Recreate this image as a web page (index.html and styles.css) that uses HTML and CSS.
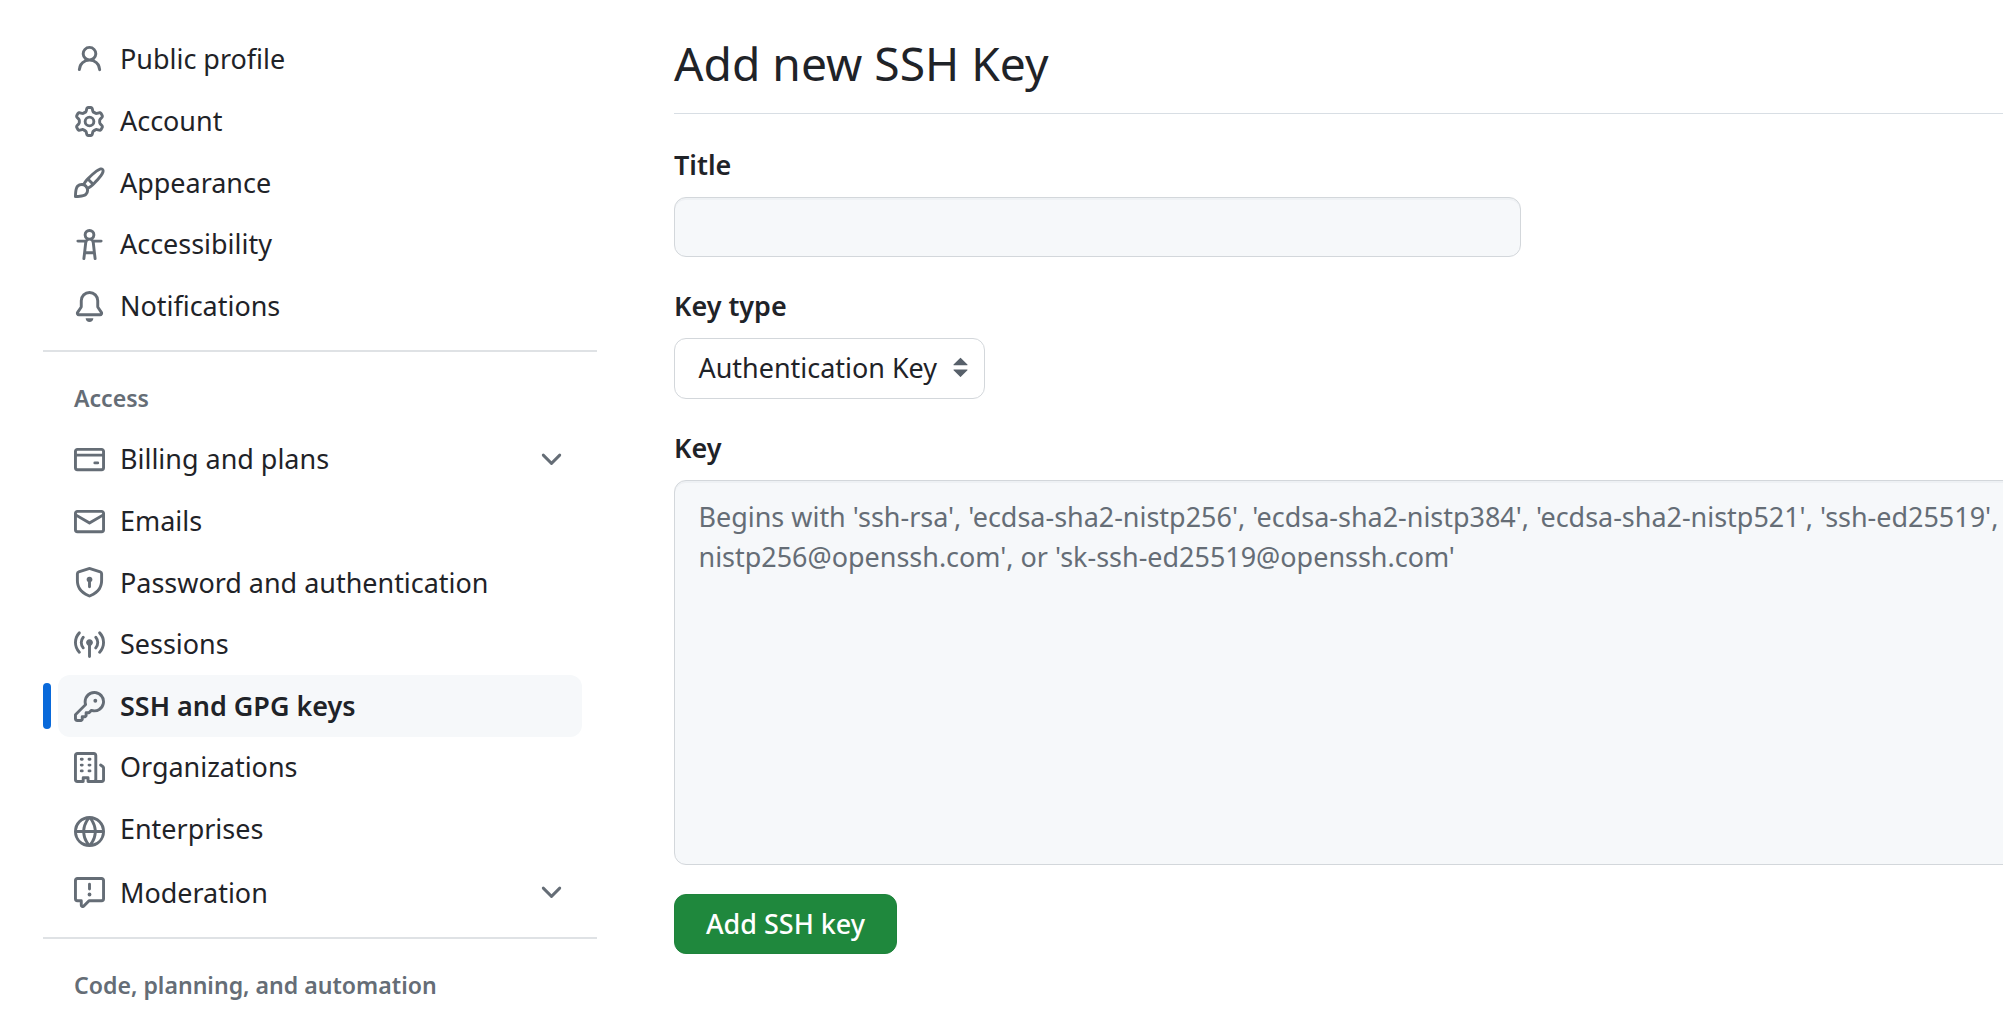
FILE: index.html
```html
<!DOCTYPE html>
<html lang="en">
<head>
<meta charset="utf-8">
<title>Add new SSH Key</title>
<link rel="stylesheet" href="styles.css">
</head>
<body>
<div class="page">
  <nav class="sidebar">
    <ul class="nav-list">
      <li class="nav-item"><svg class="icon" viewBox="0 0 16 16"><path d="M10.561 8.073a6.005 6.005 0 0 1 3.432 5.142.75.75 0 1 1-1.498.07 4.5 4.5 0 0 0-8.99 0 .75.75 0 0 1-1.498-.07 6.004 6.004 0 0 1 3.431-5.142 3.999 3.999 0 1 1 5.123 0ZM10.5 5a2.5 2.5 0 1 0-5 0 2.5 2.5 0 0 0 5 0Z"/></svg><span class="label">Public profile</span></li>
      <li class="nav-item"><svg class="icon" viewBox="0 0 16 16"><path d="M8 0a8.2 8.2 0 0 1 .701.031C9.444.095 9.99.645 10.16 1.29l.288 1.107c.018.066.079.158.212.224.231.114.454.243.668.386.123.082.233.09.299.071l1.103-.303c.644-.176 1.392.021 1.82.63.27.385.506.792.704 1.218.315.675.111 1.422-.364 1.891l-.814.806c-.049.048-.098.147-.088.294.016.257.016.515 0 .772-.01.147.038.246.088.294l.814.806c.475.469.679 1.216.364 1.891a7.977 7.977 0 0 1-.704 1.217c-.428.61-1.176.807-1.82.63l-1.102-.302c-.067-.019-.177-.011-.3.071a5.909 5.909 0 0 1-.668.386c-.133.066-.194.158-.211.224l-.29 1.106c-.168.646-.715 1.196-1.458 1.26a8.006 8.006 0 0 1-1.402 0c-.743-.064-1.289-.614-1.458-1.26l-.289-1.106c-.018-.066-.079-.158-.212-.224a5.738 5.738 0 0 1-.668-.386c-.123-.082-.233-.09-.299-.071l-1.103.303c-.644.176-1.392-.021-1.82-.63a8.12 8.12 0 0 1-.704-1.218c-.315-.675-.111-1.422.363-1.891l.815-.806c.05-.048.098-.147.088-.294a6.214 6.214 0 0 1 0-.772c.01-.147-.038-.246-.088-.294l-.815-.806C.635 6.045.431 5.298.746 4.623a7.92 7.92 0 0 1 .704-1.217c.428-.61 1.176-.807 1.82-.63l1.102.302c.067.019.177.011.3-.071.214-.143.437-.272.668-.386.133-.066.194-.158.211-.224l.29-1.106C6.009.645 6.556.095 7.299.03 7.53.01 7.764 0 8 0Zm-.571 1.525c-.036.003-.108.036-.137.146l-.289 1.105c-.147.561-.549.967-.998 1.189-.173.086-.34.183-.5.29-.417.278-.97.423-1.529.27l-1.103-.303c-.109-.03-.175.016-.195.045-.22.312-.412.644-.573.99-.014.031-.021.11.059.19l.815.806c.411.406.562.957.53 1.456a4.709 4.709 0 0 0 0 .582c.032.499-.119 1.05-.53 1.456l-.815.806c-.081.08-.073.159-.059.19.162.346.353.677.573.989.02.03.085.076.195.046l1.102-.303c.56-.153 1.113-.008 1.53.27.161.107.328.204.501.29.447.222.85.629.997 1.189l.289 1.105c.029.109.101.143.137.146a6.6 6.6 0 0 0 1.142 0c.036-.003.108-.036.137-.146l.289-1.105c.147-.561.549-.967.998-1.189.173-.086.34-.183.5-.29.417-.278.97-.423 1.529-.27l1.103.303c.109.029.175-.016.195-.045.22-.313.411-.644.573-.99.014-.031.021-.11-.059-.19l-.815-.806c-.411-.406-.562-.957-.53-1.456a4.709 4.709 0 0 0 0-.582c-.032-.499.119-1.05.53-1.456l.815-.806c.081-.08.073-.159.059-.19a6.464 6.464 0 0 0-.573-.989c-.02-.03-.085-.076-.195-.046l-1.102.303c-.56.153-1.113.008-1.53-.27a4.44 4.44 0 0 0-.501-.29c-.447-.222-.85-.629-.997-1.189l-.289-1.105c-.029-.11-.101-.143-.137-.146a6.6 6.6 0 0 0-1.142 0ZM11 8a3 3 0 1 1-6 0 3 3 0 0 1 6 0ZM9.5 8a1.5 1.5 0 1 0-3.001.001A1.5 1.5 0 0 0 9.5 8Z"/></svg><span class="label">Account</span></li>
      <li class="nav-item"><svg class="icon" viewBox="0 0 16 16"><path d="M11.134 1.535c.7-.509 1.416-.942 2.076-1.155.649-.21 1.463-.267 2.069.34.603.601.568 1.411.368 2.07-.202.668-.624 1.39-1.125 2.096-1.011 1.424-2.496 2.987-3.775 4.249-1.098 1.084-2.132 1.839-3.04 2.3a3.744 3.744 0 0 1-1.055 3.217c-.431.431-1.065.691-1.657.861-.614.177-1.294.287-1.914.357A21.151 21.151 0 0 1 .797 16H.743l.007-.75H.749L.742 16a.75.75 0 0 1-.743-.742l.743-.008-.742.007v-.054a21.25 21.25 0 0 1 .13-2.284c.067-.647.187-1.287.358-1.914.17-.591.43-1.226.86-1.657a3.746 3.746 0 0 1 3.227-1.054c.466-.893 1.225-1.907 2.314-2.982 1.271-1.255 2.833-2.75 4.245-3.777ZM1.62 13.089c-.051.464-.086.929-.104 1.395.466-.018.932-.053 1.396-.104a10.511 10.511 0 0 0 1.668-.309c.526-.151.856-.325 1.011-.48a2.25 2.25 0 1 0-3.182-3.182c-.155.155-.329.485-.48 1.01a10.515 10.515 0 0 0-.309 1.67Zm10.396-10.34c-1.224.89-2.605 2.189-3.822 3.384l1.718 1.718c1.21-1.205 2.51-2.597 3.387-3.833.47-.662.78-1.227.912-1.662.134-.444.032-.551.009-.575h-.001V1.78c-.014-.014-.113-.113-.548.027-.432.14-.995.462-1.655.942Zm-4.832 7.266-.001.001a9.859 9.859 0 0 0 1.63-1.142L7.155 7.216a9.7 9.7 0 0 0-1.161 1.607c.482.302.889.71 1.19 1.192Z"/></svg><span class="label">Appearance</span></li>
      <li class="nav-item"><svg class="icon" viewBox="0 0 16 16"><path d="M9.923 5.302c.063.063.122.129.178.198H14A.75.75 0 0 1 14 7h-3.3l.578 5.163.362 2.997a.75.75 0 0 1-1.49.18L9.868 13H6.132l-.282 2.34a.75.75 0 0 1-1.49-.18l.362-2.997L5.3 7H2a.75.75 0 0 1 0-1.5h3.9a2.54 2.54 0 0 1 .176-.198 3 3 0 1 1 3.847 0ZM9.2 7.073h-.001a1.206 1.206 0 0 0-2.398 0L6.305 11.5h3.39ZM9.5 3a1.5 1.5 0 1 0-3.001.001A1.5 1.5 0 0 0 9.5 3Z"/></svg><span class="label">Accessibility</span></li>
      <li class="nav-item"><svg class="icon" viewBox="0 0 16 16"><path d="M8 16a2 2 0 0 0 1.985-1.75c.017-.137-.097-.25-.235-.25h-3.5c-.138 0-.252.113-.235.25A2 2 0 0 0 8 16ZM3 5a5 5 0 0 1 10 0v2.947c0 .05.015.098.042.139l1.703 2.555A1.519 1.519 0 0 1 13.482 13H2.518a1.516 1.516 0 0 1-1.263-2.36l1.703-2.554A.255.255 0 0 0 3 7.947Zm5-3.5A3.5 3.5 0 0 0 4.5 5v2.947c0 .346-.102.683-.294.97l-1.703 2.556a.017.017 0 0 0-.003.01l.001.006c0 .002.002.004.004.006l.006.004.007.001h10.964l.007-.001.006-.004.004-.006.001-.007a.017.017 0 0 0-.003-.01l-1.703-2.554a1.745 1.745 0 0 1-.294-.97V5A3.5 3.5 0 0 0 8 1.5Z"/></svg><span class="label">Notifications</span></li>
    </ul>
    <h3 class="group-title">Access</h3>
    <ul class="nav-list">
      <li class="nav-item"><svg class="icon" viewBox="0 0 16 16"><path d="M10.75 9a.75.75 0 0 0 0 1.5h1.5a.75.75 0 0 0 0-1.5h-1.5Z"/><path d="M0 3.75C0 2.784.784 2 1.75 2h12.5c.966 0 1.75.784 1.75 1.75v8.5A1.75 1.75 0 0 1 14.25 14H1.75A1.75 1.75 0 0 1 0 12.25ZM14.5 6.5h-13v5.75c0 .138.112.25.25.25h12.5a.25.25 0 0 0 .25-.25Zm0-2.75a.25.25 0 0 0-.25-.25H1.75a.25.25 0 0 0-.25.25V5h13Z"/></svg><span class="label">Billing and plans</span><svg class="icon" viewBox="0 0 16 16"><path d="M12.78 5.22a.749.749 0 0 1 0 1.06l-4.25 4.25a.749.749 0 0 1-1.06 0L3.22 6.28a.749.749 0 1 1 1.06-1.06L8 8.939l3.72-3.719a.749.749 0 0 1 1.06 0Z"/></svg></li>
      <li class="nav-item"><svg class="icon" viewBox="0 0 16 16"><path d="M1.75 2h12.5c.966 0 1.75.784 1.75 1.75v8.5A1.75 1.75 0 0 1 14.25 14H1.75A1.75 1.75 0 0 1 0 12.25v-8.5C0 2.784.784 2 1.75 2ZM1.5 12.251c0 .138.112.25.25.25h12.5a.25.25 0 0 0 .25-.25V5.809L8.38 9.397a.75.75 0 0 1-.76 0L1.5 5.809v6.442Zm13-8.181v-.32a.25.25 0 0 0-.25-.25H1.75a.25.25 0 0 0-.25.25v.32L8 7.88Z"/></svg><span class="label">Emails</span></li>
      <li class="nav-item"><svg class="icon" viewBox="0 0 16 16"><path d="m8.533.133 5.25 1.68A1.75 1.75 0 0 1 15 3.48V7c0 1.566-.32 3.182-1.303 4.682-.983 1.498-2.585 2.813-5.032 3.855a1.697 1.697 0 0 1-1.33 0c-2.447-1.042-4.049-2.357-5.032-3.855C1.32 10.182 1 8.566 1 7V3.48a1.755 1.755 0 0 1 1.217-1.667l5.25-1.68a1.748 1.748 0 0 1 1.066 0Zm-.61 1.429.001.001-5.25 1.68a.251.251 0 0 0-.174.237V7c0 1.36.275 2.666 1.057 3.859.784 1.194 2.121 2.342 4.366 3.298a.196.196 0 0 0 .154 0c2.245-.957 3.582-2.103 4.366-3.297C13.225 9.666 13.5 8.358 13.5 7V3.48a.25.25 0 0 0-.174-.238l-5.25-1.68a.25.25 0 0 0-.153 0ZM9.5 6.5c0 .536-.286 1.032-.75 1.3v2.45a.75.75 0 0 1-1.5 0V7.8A1.5 1.5 0 1 1 9.5 6.5Z"/></svg><span class="label">Password and authentication</span></li>
      <li class="nav-item"><svg class="icon" viewBox="0 0 16 16"><path d="M8.75 8.582v5.668a.75.75 0 0 1-1.5 0V8.582a1.75 1.75 0 1 1 1.5 0Zm3.983-7.125a.75.75 0 0 1 1.06.026A7.976 7.976 0 0 1 16 7c0 2.139-.84 4.083-2.207 5.517a.75.75 0 1 1-1.086-1.034A6.474 6.474 0 0 0 14.5 7a6.474 6.474 0 0 0-1.793-4.483.75.75 0 0 1 .026-1.06Zm-9.466 0c.3.286.312.76.026 1.06A6.474 6.474 0 0 0 1.5 7a6.47 6.47 0 0 0 1.793 4.483.75.75 0 0 1-1.086 1.034A7.973 7.973 0 0 1 0 7c0-2.139.84-4.083 2.207-5.517a.75.75 0 0 1 1.06-.026Zm8.556 2.321A4.988 4.988 0 0 1 13 7a4.988 4.988 0 0 1-1.177 3.222.75.75 0 1 1-1.146-.967A3.487 3.487 0 0 0 11.5 7c0-.86-.309-1.645-.823-2.255a.75.75 0 0 1 1.146-.967Zm-6.492.958A3.48 3.48 0 0 0 4.5 7a3.48 3.48 0 0 0 .823 2.255.75.75 0 0 1-1.146.967A4.981 4.981 0 0 1 3 7a4.982 4.982 0 0 1 1.188-3.236.75.75 0 1 1 1.143.972Z"/></svg><span class="label">Sessions</span></li>
      <li class="nav-item current"><svg class="icon" viewBox="0 0 16 16"><path d="M10.5 0a5.499 5.499 0 1 1-1.288 10.848l-.932.932a.749.749 0 0 1-.53.22H7v.75a.749.749 0 0 1-.22.53l-.5.5a.749.749 0 0 1-.53.22H5v.75a.749.749 0 0 1-.22.53l-.5.5a.749.749 0 0 1-.53.22h-2A1.75 1.75 0 0 1 0 14.25v-2c0-.199.079-.389.22-.53l4.932-4.932A5.5 5.5 0 0 1 10.5 0Zm-4 5.5c-.001.431.069.86.205 1.269a.75.75 0 0 1-.181.768L1.5 12.56v1.69c0 .138.112.25.25.25h1.69l.06-.06v-1.19a.75.75 0 0 1 .75-.75h1.19l.06-.06v-1.19a.75.75 0 0 1 .75-.75h1.19l1.023-1.025a.75.75 0 0 1 .768-.18A4 4 0 1 0 6.5 5.5ZM11 6a1 1 0 1 1 0-2 1 1 0 0 1 0 2Z"/></svg><span class="label">SSH and GPG keys</span></li>
      <li class="nav-item"><svg class="icon" viewBox="0 0 16 16"><path d="M1.75 16A1.75 1.75 0 0 1 0 14.25V1.75C0 .784.784 0 1.75 0h8.5C11.216 0 12 .784 12 1.75v12.5c0 .085-.006.168-.018.25h2.268a.25.25 0 0 0 .25-.25V8.285a.25.25 0 0 0-.111-.208l-1.055-.703a.749.749 0 1 1 .832-1.248l1.055.703c.487.325.779.871.779 1.456v5.965A1.75 1.75 0 0 1 14.25 16h-3.5a.766.766 0 0 1-.197-.026c-.099.017-.2.026-.303.026h-3a.75.75 0 0 1-.75-.75V14h-1v1.25a.75.75 0 0 1-.75.75Zm-.25-1.75c0 .138.112.25.25.25H4v-1.25a.75.75 0 0 1 .75-.75h2.5a.75.75 0 0 1 .75.75v1.25h2.25a.25.25 0 0 0 .25-.25V1.75a.25.25 0 0 0-.25-.25h-8.5a.25.25 0 0 0-.25.25ZM3.75 6h.5a.75.75 0 0 1 0 1.5h-.5a.75.75 0 0 1 0-1.5ZM3 3.75A.75.75 0 0 1 3.75 3h.5a.75.75 0 0 1 0 1.5h-.5A.75.75 0 0 1 3 3.75Zm4 3A.75.75 0 0 1 7.75 6h.5a.75.75 0 0 1 0 1.5h-.5A.75.75 0 0 1 7 6.75ZM7.75 3h.5a.75.75 0 0 1 0 1.5h-.5a.75.75 0 0 1 0-1.5ZM3 9.75A.75.75 0 0 1 3.75 9h.5a.75.75 0 0 1 0 1.5h-.5A.75.75 0 0 1 3 9.75ZM7.75 9h.5a.75.75 0 0 1 0 1.5h-.5a.75.75 0 0 1 0-1.5Z"/></svg><span class="label">Organizations</span></li>
      <li class="nav-item"><svg class="icon icon-globe" viewBox="0 0 16 16"><path d="M8 0a8 8 0 1 1 0 16A8 8 0 0 1 8 0ZM5.78 8.75a9.64 9.64 0 0 0 1.363 4.177c.255.426.542.832.857 1.215.245-.296.551-.705.857-1.215A9.64 9.64 0 0 0 10.22 8.75Zm4.44-1.5a9.64 9.64 0 0 0-1.363-4.177c-.307-.51-.612-.919-.857-1.215a9.927 9.927 0 0 0-.857 1.215A9.64 9.64 0 0 0 5.78 7.25Zm-5.944 1.5H1.543a6.507 6.507 0 0 0 4.666 5.5c-.123-.181-.24-.365-.352-.552-.715-1.192-1.437-2.874-1.581-4.948Zm-2.733-1.5h2.733c.144-2.074.866-3.756 1.58-4.948.12-.197.237-.381.353-.552a6.507 6.507 0 0 0-4.666 5.5Zm10.181 1.5c-.144 2.074-.866 3.756-1.58 4.948-.12.197-.237.381-.353.552a6.507 6.507 0 0 0 4.666-5.5Zm2.733-1.5a6.507 6.507 0 0 0-4.666-5.5c.123.181.24.365.353.552.714 1.192 1.436 2.874 1.58 4.948Z"/></svg><span class="label">Enterprises</span></li>
      <li class="nav-item nav-item-last"><svg class="icon" viewBox="0 0 16 16"><path d="M0 1.75C0 .784.784 0 1.75 0h12.5C15.216 0 16 .784 16 1.75v9.5A1.75 1.75 0 0 1 14.25 13H8.06l-2.573 2.573A1.458 1.458 0 0 1 3 14.543V13H1.75A1.75 1.75 0 0 1 0 11.25Zm1.75-.25a.25.25 0 0 0-.25.25v9.5c0 .138.112.25.25.25h2a.75.75 0 0 1 .75.75v2.19l2.72-2.72a.749.749 0 0 1 .53-.22h6.5a.25.25 0 0 0 .25-.25v-9.5a.25.25 0 0 0-.25-.25Zm7 2.25v2.5a.75.75 0 0 1-1.5 0v-2.5a.75.75 0 0 1 1.5 0ZM9 9a1 1 0 1 1-2 0 1 1 0 0 1 2 0Z"/></svg><span class="label">Moderation</span><svg class="icon" viewBox="0 0 16 16"><path d="M12.78 5.22a.749.749 0 0 1 0 1.06l-4.25 4.25a.749.749 0 0 1-1.06 0L3.22 6.28a.749.749 0 1 1 1.06-1.06L8 8.939l3.72-3.719a.749.749 0 0 1 1.06 0Z"/></svg></li>
    </ul>
    <h3 class="group-title">Code, planning, and automation</h3>
  </nav>
  <main class="content">
    <h1 class="page-title">Add new SSH Key</h1>
    <form class="form">
      <label class="field-label" for="title">Title</label>
      <input class="control text-input" id="title" type="text">
      <label class="field-label" for="type">Key type</label>
      <button class="control select" id="type" type="button"><span>Authentication Key</span><svg class="icon icon-select" viewBox="0 0 16 16"><path d="m4.427 9.427 3.396 3.396a.251.251 0 0 0 .354 0l3.396-3.396A.25.25 0 0 0 11.396 9H4.604a.25.25 0 0 0-.177.427ZM4.423 6.47 7.82 3.072a.25.25 0 0 1 .354 0L11.57 6.47a.25.25 0 0 1-.177.427H4.6a.25.25 0 0 1-.177-.427Z"/></svg></button>
      <label class="field-label" for="key">Key</label>
      <textarea class="control key-input" id="key" placeholder="Begins with 'ssh-rsa', 'ecdsa-sha2-nistp256', 'ecdsa-sha2-nistp384', 'ecdsa-sha2-nistp521', 'ssh-ed25519',&#10;nistp256@openssh.com', or 'sk-ssh-ed25519@openssh.com'"></textarea>
      <button class="submit" type="button">Add SSH key</button>
    </form>
  </main>
</div>
</body>
</html>
```
FILE: styles.css
```css
* {
  box-sizing: border-box;
}

body {
  margin: 0;
  background: #fff;
  color: #1f2328;
  font-family: "Noto Sans", sans-serif;
  font-size: 26.95px;
  overflow: hidden;
}

.page {
  display: flex;
  height: 1015px;
  overflow: hidden;
}

.sidebar {
  flex: none;
  width: 554px;
  margin-left: 43px;
  padding-top: 29px;
}

.nav-list {
  list-style: none;
  margin: 0;
  padding: 0 15px 13px;
  border-bottom: 2px solid #dfe2e5;
}

.nav-item {
  display: flex;
  align-items: center;
  gap: 15.5px;
  height: 61.6px;
  padding: 0 15.5px;
  border-radius: 12px;
  position: relative;
}

.nav-item-last {
  height: 64px;
}

.icon {
  flex: none;
  width: 31px;
  height: 31px;
  fill: #656d76;
}

.icon-globe {
  margin-top: 5px;
}

.label {
  flex: 1;
  line-height: 38px;
  margin-top: -0.8px;
  white-space: nowrap;
}

.nav-item-last .label {
  margin-top: 1px;
}

.current {
  background: #f6f8fa;
  font-weight: 600;
}

.current::before {
  content: "";
  position: absolute;
  left: -15px;
  top: 8px;
  width: 8px;
  height: 46px;
  border-radius: 6px;
  background: #0969da;
}

.group-title {
  margin: 0;
  padding: 31px 31px 15px;
  font-size: 23.1px;
  font-weight: 600;
  line-height: 31px;
  color: #656d76;
}

.content {
  flex: none;
  width: 1560px;
  margin-left: 77px;
  padding-top: 28px;
}

.page-title {
  margin: 0;
  height: 86px;
  font-size: 46.2px;
  font-weight: 400;
  line-height: 72px;
  border-bottom: 1px solid #d8dee4;
}

.form {
  display: flex;
  flex-direction: column;
  align-items: flex-start;
  padding-top: 31px;
}

.field-label {
  line-height: 40px;
  margin-bottom: 12px;
  font-weight: 600;
}

.control {
  border: 1px solid #d3d7db;
  border-radius: 12px;
  margin: 0 0 29px;
  font: inherit;
  color: inherit;
}

.text-input {
  width: 847px;
  height: 60px;
  background: #f6f8fa;
  box-shadow: inset 0 2px 0 rgba(208, 215, 222, 0.2);
}

.select {
  display: flex;
  align-items: center;
  justify-content: space-between;
  width: 311px;
  height: 61px;
  padding: 0 8px 2px 23.5px;
  background: #fff;
}

.icon-select {
  fill: #57606a;
}

.key-input {
  width: 1560px;
  height: 385px;
  padding: 16px 23.5px;
  line-height: 40.4px;
  resize: none;
  background: #f6f8fa;
  box-shadow: inset 0 2px 0 rgba(208, 215, 222, 0.2);
}

.key-input::placeholder {
  color: #656d76;
}

.submit {
  width: 223px;
  height: 60px;
  padding: 0 0 2px;
  border: 1px solid #1f833c;
  border-radius: 12px;
  background: #1f883d;
  color: #fff;
  font: inherit;
  font-weight: 500;
}
```
